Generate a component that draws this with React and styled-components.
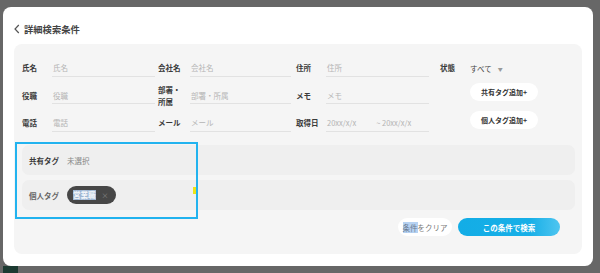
import React from 'react';
import styled, { createGlobalStyle } from 'styled-components';

const GlobalStyle = createGlobalStyle`
    html, body {
        margin: 0;
        padding: 0;
        background: #676767;
    }
    body {
        font-family: "Noto Sans CJK JP", "Noto Sans", sans-serif;
        color: #333;
    }
`;

const Page = styled.div`
    width: 600px;
    height: 273px;
    padding: 7px 7px 0 3px;
    box-sizing: border-box;
    overflow: hidden;
`;

const Modal = styled.div`
    width: 590px;
    height: 259px;
    box-sizing: border-box;
    background: #fff;
    border-radius: 8px;
    padding: 15px 11px 12px 11px;
    display: flex;
    flex-direction: column;
`;

const BackdropBlock = styled.div`
    width: 15px;
    height: 7px;
    background: #1c3a31;
`;

const Header = styled.div`
    display: flex;
    align-items: center;
    gap: 4px;
    height: 14px;
    margin-bottom: 8px;
    font-size: 9.3px;
    font-weight: 700;
    color: #444;
`;

const Panel = styled.div`
    position: relative;
    flex: 1;
    background: #f5f5f5;
    border-radius: 8px;
    padding: 14px 7px 18px 8px;
    display: flex;
    flex-direction: column;
`;

const FieldGrid = styled.div`
    display: grid;
    grid-template-columns: 30px 103px 35px 101px 35px 103px 41px 1fr;
    grid-template-rows: repeat(3, 20px);
    row-gap: 7.5px;
`;

const Label = styled.div`
    align-self: center;
    padding-left: ${p => p.$pad || 0}px;
    padding-right: ${p => p.$padRight || 0}px;
    font-size: 7.5px;
    line-height: 12px;
    font-weight: 700;
    color: #3a3a3a;
`;

const Input = styled.div`
    align-self: center;
    height: 16px;
    display: flex;
    align-items: center;
    gap: ${p => p.$gap || 0}px;
    padding-left: 1px;
    border-bottom: 1px solid #e2e2e2;
    font-size: 7.5px;
    color: #b4b4b4;
    white-space: nowrap;
`;

const SelectValue = styled.div`
    align-self: center;
    display: flex;
    align-items: center;
    gap: 6px;
    font-size: 7.5px;
    color: #444;

    span {
        font-size: 5px;
        color: #999;
    }
`;

const AddButton = styled.button`
    grid-column: 8;
    align-self: start;
    margin-top: -2.5px;
    width: 68px;
    height: 18px;
    border: 0;
    border-radius: 9px;
    background: #fff;
    font-family: inherit;
    font-size: 7px;
    font-weight: 700;
    color: #333;
    padding: 0;
    cursor: pointer;
`;

const TagArea = styled.div`
    margin-top: 12px;
    display: flex;
    flex-direction: column;
    gap: 5px;
`;

const TagRow = styled.div`
    height: 30px;
    display: flex;
    align-items: center;
    padding-left: 7px;
    background: #efefef;
    border-radius: 7px;
`;

const TagLabel = styled.div`
    width: 38px;
    font-size: 7.5px;
    font-weight: 700;
    color: ${p => p.$muted ? '#666' : '#3a3a3a'};
`;

const EmptyText = styled.div`
    font-size: 7.5px;
    color: #888;
`;

const Chip = styled.div`
    display: flex;
    align-items: center;
    gap: 6px;
    height: 18px;
    padding: 0 7px 0 6px;
    border-radius: 9px;
    background: #474747;
    font-size: 7.5px;
    font-weight: 700;
`;

const ChipText = styled.span`
    background: #9fb6d3;
    color: #f4f6fa;
    line-height: 10px;
`;

const ChipClose = styled.span`
    color: #888;
    font-size: 7px;
    font-weight: 400;
`;

const Footer = styled.div`
    margin-top: 8px;
    padding-right: 15px;
    display: flex;
    justify-content: flex-end;
    gap: 6px;
`;

const PillButton = styled.button`
    height: 18px;
    width: ${p => p.$width}px;
    border: 0;
    border-radius: 9px;
    padding: 0;
    font-family: inherit;
    font-size: 7.5px;
    cursor: pointer;
    background: ${p => p.$primary
        ? 'linear-gradient(90deg, #13ade6 0%, #17afe7 70%, #4fc5f0 100%)'
        : '#fff'};
    color: ${p => p.$primary ? '#fff' : '#777'};
    font-weight: ${p => p.$primary ? 700 : 400};
`;

const Selected = styled.span`
    background: #b6d2f2;
    color: #6b7b90;
`;

const Annotation = styled.div`
    position: absolute;
    left: 1px;
    top: 98px;
    width: 183px;
    height: 77px;
    box-sizing: border-box;
    border: 2px solid #22b3ef;
    pointer-events: none;
`;

const Marker = styled.div`
    position: absolute;
    left: 179px;
    top: 143px;
    width: 2.5px;
    height: 7px;
    background: #ece418;
`;

const BackIcon = () => (
    <svg width="6" height="10" viewBox="0 0 6 10">
        <polyline points="4.8,1 1,5 4.8,9" fill="none" stroke="#555" strokeWidth="1.2" />
    </svg>
);

const App = () => (
    <Page>
        <GlobalStyle />
        <Modal>
            <Header>
                <BackIcon />
                詳細検索条件
            </Header>
            <Panel>
                <FieldGrid>
                    <Label>氏名</Label>
                    <Input>氏名</Input>
                    <Label $pad={3}>会社名</Label>
                    <Input>会社名</Input>
                    <Label $pad={5}>住所</Label>
                    <Input>住所</Input>
                    <Label $pad={11}>状態</Label>
                    <SelectValue>すべて<span>▼</span></SelectValue>

                    <Label>役職</Label>
                    <Input>役職</Input>
                    <Label $pad={3} $padRight={4}>部署・所属</Label>
                    <Input>部署・所属</Input>
                    <Label $pad={5}>メモ</Label>
                    <Input>メモ</Input>
                    <AddButton>共有タグ追加+</AddButton>

                    <Label>電話</Label>
                    <Input>電話</Input>
                    <Label $pad={3}>メール</Label>
                    <Input>メール</Input>
                    <Label $pad={5}>取得日</Label>
                    <Input $gap={20}><span>20xx/x/x</span><span>~ 20xx/x/x</span></Input>
                    <AddButton>個人タグ追加+</AddButton>
                </FieldGrid>

                <TagArea>
                    <TagRow>
                        <TagLabel>共有タグ</TagLabel>
                        <EmptyText>未選択</EmptyText>
                    </TagRow>
                    <TagRow>
                        <TagLabel $muted>個人タグ</TagLabel>
                        <Chip>
                            <ChipText>営業職</ChipText>
                            <ChipClose>×</ChipClose>
                        </Chip>
                    </TagRow>
                </TagArea>

                <Footer>
                    <PillButton $width={54}><Selected>条件</Selected>をクリア</PillButton>
                    <PillButton $primary $width={102}>この条件で検索</PillButton>
                </Footer>

                <Annotation />
                <Marker />
            </Panel>
        </Modal>
        <BackdropBlock />
    </Page>
);

export default App;
